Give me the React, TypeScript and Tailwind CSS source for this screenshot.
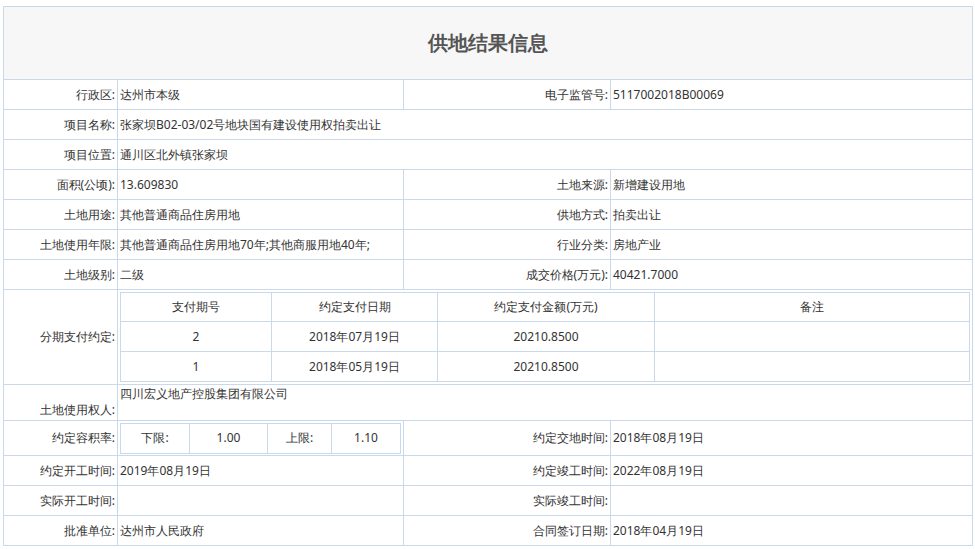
import React from "react";

const B = "border border-[#c9d8ea]";
const L = `${B} text-right pr-[2px] text-[#333] whitespace-nowrap`;
const V = `${B} text-left pl-[2px] text-[#333]`;
const C = `${B} text-center text-[#333]`;

function Row({ a, b, c, d }: { a: string; b: string; c?: string; d?: string }) {
  return (
    <tr className="h-[30px]">
      <td className={L}>{a}</td>
      {c === undefined ? (
        <td className={V} colSpan={3}>{b}</td>
      ) : (
        <>
          <td className={V}>{b}</td>
          <td className={L}>{c}</td>
          <td className={V}>{d}</td>
        </>
      )}
    </tr>
  );
}

export default function App() {
  const pay = [
    ["2", "2018年07月19日", "20210.8500"],
    ["1", "2018年05月19日", "20210.8500"],
  ];
  return (
    <div className="bg-white w-[975px] h-[549px] pt-[6px] pl-[3px] font-['Noto_Sans_CJK_SC',sans-serif]">
      <table className="w-[970px] border-collapse text-[12px] leading-none table-fixed">
        <colgroup>
          <col className="w-[114px]" />
          <col className="w-[286px]" />
          <col className="w-[207px]" />
          <col />
        </colgroup>
        <tbody>
          <tr className="h-[73px]">
            <td colSpan={4} className={`${B} bg-[#f7f7f7] text-center text-[20px] font-bold text-[#555]`}>供地结果信息</td>
          </tr>
          <Row a="行政区:" b="达州市本级" c="电子监管号:" d="5117002018B00069" />
          <Row a="项目名称:" b="张家坝B02-03/02号地块国有建设使用权拍卖出让" />
          <Row a="项目位置:" b="通川区北外镇张家坝" />
          <Row a="面积(公顷):" b="13.609830" c="土地来源:" d="新增建设用地" />
          <Row a="土地用途:" b="其他普通商品住房用地" c="供地方式:" d="拍卖出让" />
          <Row a="土地使用年限:" b="其他普通商品住房用地70年;其他商服用地40年;" c="行业分类:" d="房地产业" />
          <Row a="土地级别:" b="二级" c="成交价格(万元):" d="40421.7000" />
          <tr className="h-[95px]">
            <td className={L}>分期支付约定:</td>
            <td colSpan={3} className={`${B} p-[2px]`}>
              <table className="w-full border-collapse table-fixed">
                <colgroup>
                  <col className="w-[151px]" />
                  <col className="w-[166px]" />
                  <col className="w-[217px]" />
                  <col />
                </colgroup>
                <tbody>
                  <tr className="h-[29px]">
                    {["支付期号", "约定支付日期", "约定支付金额(万元)", "备注"].map((t) => (
                      <td key={t} className={C}>{t}</td>
                    ))}
                  </tr>
                  {pay.map((r) => (
                    <tr key={r[1]} className="h-[30px]">
                      <td className={C}>{r[0]}</td>
                      <td className={C}>{r[1]}</td>
                      <td className={C}>{r[2]}</td>
                      <td className={B}></td>
                    </tr>
                  ))}
                </tbody>
              </table>
            </td>
          </tr>
          <tr className="h-[36px]">
            <td className={`${L} align-bottom pb-[4px]`}>土地使用权人:</td>
            <td colSpan={3} className={`${V} align-top pt-[3px]`}>四川宏义地产控股集团有限公司</td>
          </tr>
          <tr className="h-[35px]">
            <td className={L}>约定容积率:</td>
            <td className={`${B} px-[2px]`}>
              <table className="w-[281px] border-collapse table-fixed">
                <tbody>
                  <tr className="h-[30px]">
                    <td className={`${C} w-[69px]`}>下限:</td>
                    <td className={`${C} w-[78px]`}>1.00</td>
                    <td className={`${C} w-[64px]`}>上限:</td>
                    <td className={C}>1.10</td>
                  </tr>
                </tbody>
              </table>
            </td>
            <td className={L}>约定交地时间:</td>
            <td className={V}>2018年08月19日</td>
          </tr>
          <Row a="约定开工时间:" b="2019年08月19日" c="约定竣工时间:" d="2022年08月19日" />
          <Row a="实际开工时间:" b="" c="实际竣工时间:" d="" />
          <Row a="批准单位:" b="达州市人民政府" c="合同签订日期:" d="2018年04月19日" />
        </tbody>
      </table>
    </div>
  );
}
